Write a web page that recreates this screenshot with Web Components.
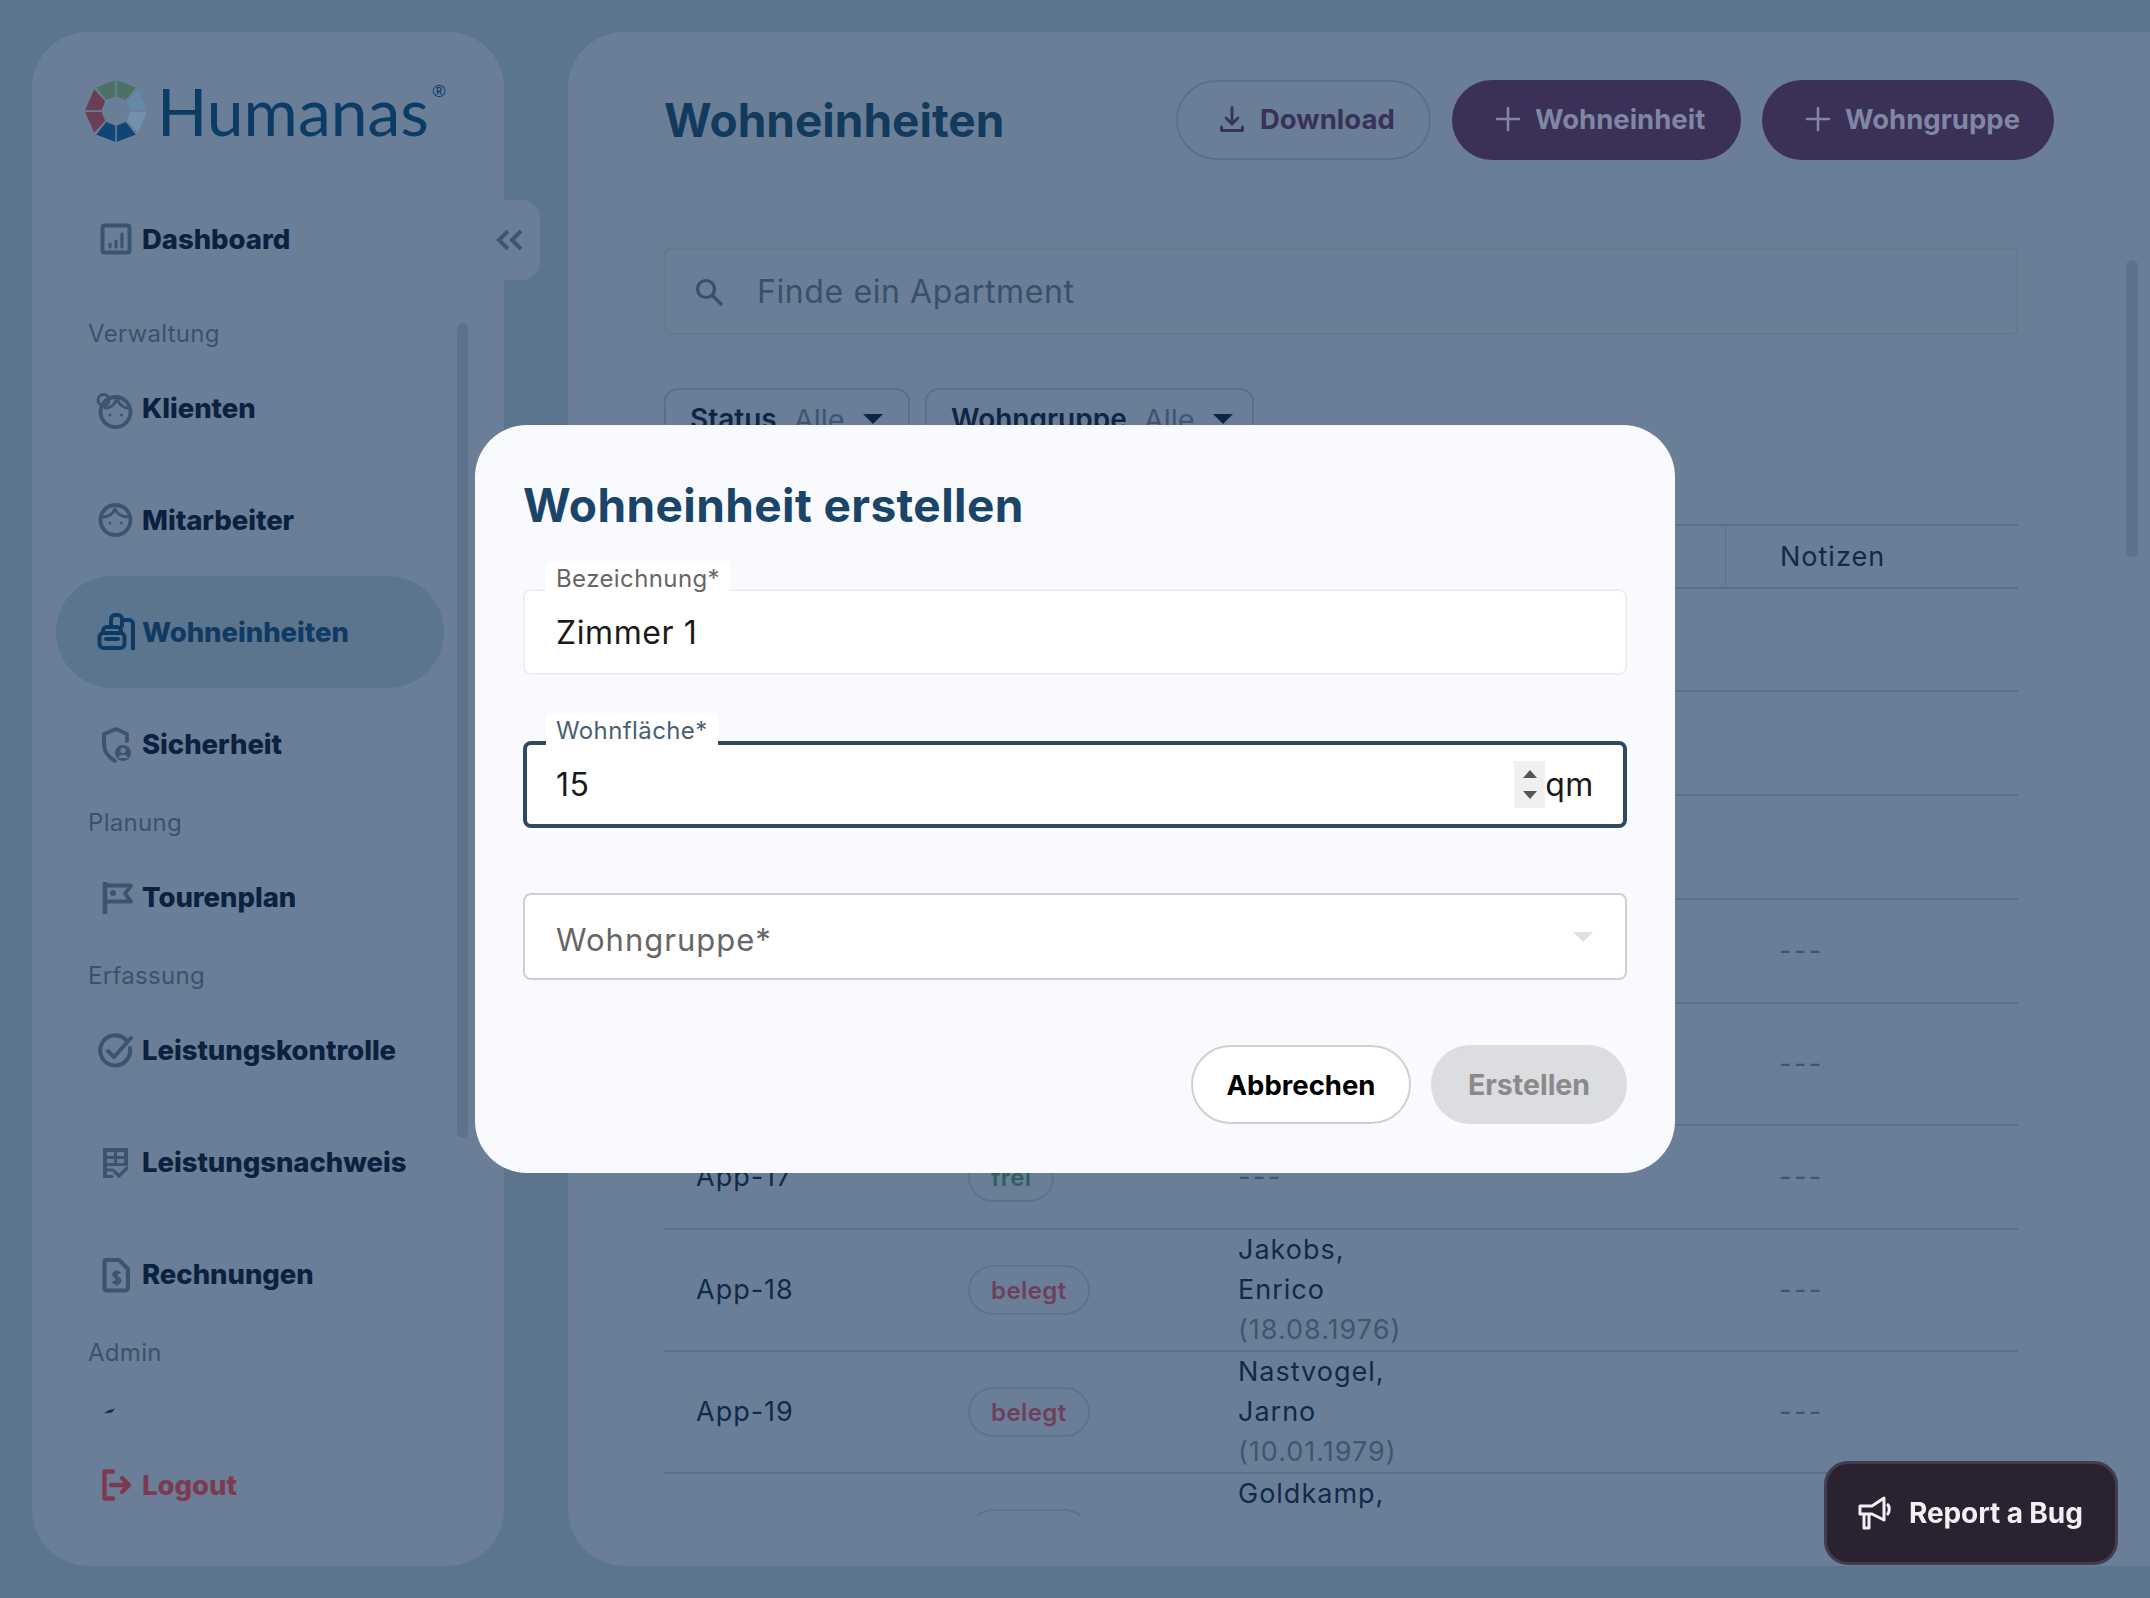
<!DOCTYPE html>
<html lang="de">
<head>
<meta charset="utf-8">
<title>Wohneinheiten</title>
<style>
  html, body { margin: 0; height: 100%; overflow: hidden; background: #5c758f; font-family: Inter, "Liberation Sans", sans-serif; }
  hu-app { height: 1598px; }
  svg[slot="icon"] { overflow: visible; fill: none; stroke: currentColor; stroke-linecap: round; stroke-linejoin: round; }
  hu-nav-item svg[slot="icon"] { width: 40px; height: 40px; }
  .dim { color: #3f566f; letter-spacing: 2.5px; }
</style>
</head>
<body>
<hu-app>
  <hu-sidebar>
    <hu-nav-item class="top" slot="top" label="Dashboard">
      <svg slot="icon" viewBox="0 0 40 40" stroke-width="4"><rect x="6.500" y="6.500" width="27" height="27" rx="2"/><path d="M14 28v-3M20 28v-6M26 28V15" stroke-width="3.200"/></svg>
    </hu-nav-item>

    <hu-nav-label>Verwaltung</hu-nav-label>
    <hu-nav-item label="Klienten">
      <svg slot="icon" viewBox="0 0 40 40" stroke-width="3.800"><circle cx="19.500" cy="24" r="15"/><circle cx="7.500" cy="12" r="5.500" stroke-width="3"/><path d="M9 20c6 0 10-4 12-9 2 5 7 9 13 10" stroke-width="3"/><circle cx="14" cy="27" r="1.500" fill="currentColor" stroke="none"/><circle cx="25.500" cy="27" r="1.500" fill="currentColor" stroke="none"/></svg>
    </hu-nav-item>
    <hu-nav-item label="Mitarbeiter">
      <svg slot="icon" viewBox="0 0 40 40" stroke-width="3.800"><circle cx="19.500" cy="20" r="15"/><path d="M6 17c7 0 11-3 13-8 2 5 7 8 14 8" stroke-width="3"/><circle cx="14" cy="23" r="1.500" fill="currentColor" stroke="none"/><circle cx="25.500" cy="23" r="1.500" fill="currentColor" stroke="none"/></svg>
    </hu-nav-item>
    <hu-nav-item label="Wohneinheiten" active>
      <svg slot="icon" viewBox="0 0 40 40" stroke-width="4"><path d="M7 20v-1a4 4 0 0 1 4-4h10a4 4 0 0 1 4 4v1"/><rect x="3.500" y="21" width="25" height="15" rx="4"/><path d="M10 27h12"/><path d="M15 14V7a4 4 0 0 1 4-4h3a4 4 0 0 1 4 4v7"/><path d="M37 38V12a4 4 0 0 0-4-4h-5" stroke-linecap="butt"/></svg>
    </hu-nav-item>
    <hu-nav-item label="Sicherheit">
      <svg slot="icon" viewBox="0 0 40 40" stroke-width="3.800"><path d="M31 17v-7L20 5 8 10v10c0 8 5 13.500 11 17"/><circle cx="27" cy="29" r="8" fill="#3c546e" stroke="none"/><circle cx="27" cy="26.500" r="2.700" fill="#6a7f97" stroke="none"/><path d="M21.800 34c2-4.500 8.400-4.500 10.400 0z" fill="#6a7f97" stroke="none"/></svg>
    </hu-nav-item>

    <hu-nav-label>Planung</hu-nav-label>
    <hu-nav-item label="Tourenplan">
      <svg slot="icon" viewBox="0 0 40 40" stroke-width="3.800"><path d="M9 5v32" stroke-width="4.600" stroke-linecap="butt"/><path d="M10 8.500h25l-6 8 6 8H10"/><circle cx="17" cy="16" r="3" fill="currentColor" stroke="none"/></svg>
    </hu-nav-item>

    <hu-nav-label>Erfassung</hu-nav-label>
    <hu-nav-item label="Leistungskontrolle">
      <svg slot="icon" viewBox="0 0 40 40" stroke-width="4"><path d="M30 10A15 15 0 1 0 34 18"/><path d="M12 21l6 6L35 8"/></svg>
    </hu-nav-item>
    <hu-nav-item label="Leistungsnachweis">
      <svg slot="icon" viewBox="0 0 40 40" stroke-width="3.200" stroke-linecap="butt"><path fill="currentColor" stroke="none" fill-rule="evenodd" d="M7 6h25v18H7zM11 10v4h7v-4zM21 10v4h7v-4zM11 17v4h7v-4zM21 17v4h7v-4z"/><path fill="currentColor" stroke="none" d="M7 24h4v12H7z"/><path d="M11 28h6M11 34.500h5"/><path d="M19 30l4 4 8-8"/></svg>
    </hu-nav-item>
    <hu-nav-item label="Rechnungen">
      <svg slot="icon" viewBox="0 0 40 40" stroke-width="4.200"><path d="M10 6h13l9 9v19a2.500 2.500 0 0 1-2.500 2.500h-19.500A2 2 0 0 1 8.500 34.500V8A2 2 0 0 1 10 6z"/><path stroke-width="2.800" stroke-linecap="butt" d="M24 19.500c-1-1.500-6-2-6.500 1s6.500 2.500 6.500 6-6 3-7 1M20.500 16.500v15"/></svg>
    </hu-nav-item>

    <hu-nav-label>Admin</hu-nav-label>
    <hu-nav-item>
      <svg slot="icon" viewBox="0 0 40 40"><path d="M8 6.500l4-3 7-2-3 4z" fill="#1a2e4a" stroke="none"/></svg>
    </hu-nav-item>

    <hu-nav-item slot="bottom" label="Logout" tone="danger">
      <svg slot="icon" viewBox="0 0 40 40" stroke-width="4.400"><path d="M17 6.500H8.500v27H17"/><path d="M15 20h17M26 13l7 7-7 7"/></svg>
    </hu-nav-item>
  </hu-sidebar>

  <hu-main>
    <span slot="title">Wohneinheiten</span>
    <hu-button slot="actions" variant="outline" style="width:255px">
      <svg slot="icon" viewBox="0 0 24 26" width="24" height="26" fill="none" stroke="currentColor" stroke-width="2.800" stroke-linecap="round" stroke-linejoin="round"><path d="M12 1.500v16M6 12l6 6 6-6M1.500 21v3.500h21V21"/></svg>
      Download
    </hu-button>
    <hu-button slot="actions" style="width:289px">
      <svg slot="icon" viewBox="0 0 22 22" width="22" height="22" fill="none" stroke="currentColor" stroke-width="2.600"><path d="M11 0v22M0 11h22"/></svg>
      Wohneinheit
    </hu-button>
    <hu-button slot="actions" style="width:292px">
      <svg slot="icon" viewBox="0 0 22 22" width="22" height="22" fill="none" stroke="currentColor" stroke-width="2.600"><path d="M11 0v22M0 11h22"/></svg>
      Wohngruppe
    </hu-button>

    <hu-search slot="search" placeholder="Finde ein Apartment"></hu-search>

    <hu-filter slot="filters" name="Status" value="Alle" style="width:246px"></hu-filter>
    <hu-filter slot="filters" name="Wohngruppe" value="Alle" style="width:329px"></hu-filter>

    <hu-table slot="table">
      <hu-row head style="--h:63px"><span slot="notes">Notizen</span></hu-row>
      <hu-row style="--h:103px"></hu-row>
      <hu-row style="--h:104px"></hu-row>
      <hu-row style="--h:104px"></hu-row>
      <hu-row style="--h:104px"><span slot="notes" class="dim">---</span></hu-row>
      <hu-row style="--h:122px"><span slot="notes" class="dim">---</span></hu-row>
      <hu-row style="--h:104px">
        <span slot="name">App-17</span>
        <hu-status slot="status" tone="free">frei</hu-status>
        <span slot="client" class="dim">---</span>
        <span slot="notes" class="dim">---</span>
      </hu-row>
      <hu-row style="--h:122px">
        <span slot="name">App-18</span>
        <hu-status slot="status" tone="taken">belegt</hu-status>
        <hu-client slot="client" name="Jakobs," first="Enrico" born="(18.08.1976)"></hu-client>
        <span slot="notes" class="dim">---</span>
      </hu-row>
      <hu-row style="--h:122px">
        <span slot="name">App-19</span>
        <hu-status slot="status" tone="taken">belegt</hu-status>
        <hu-client slot="client" name="Nastvogel," first="Jarno" born="(10.01.1979)"></hu-client>
        <span slot="notes" class="dim">---</span>
      </hu-row>
      <hu-row style="--h:122px">
        <hu-status slot="status" tone="taken">belegt</hu-status>
        <hu-client slot="client" name="Goldkamp,"></hu-client>
      </hu-row>
    </hu-table>
  </hu-main>

  <hu-modal heading="Wohneinheit erstellen">
    <hu-field label="Bezeichnung*">Zimmer 1</hu-field>
    <hu-field label="Wohnfläche*" focused unit="qm">15</hu-field>
    <hu-select placeholder="Wohngruppe*"></hu-select>
    <hu-modal-button slot="actions" style="width:220px">Abbrechen</hu-modal-button>
    <hu-modal-button slot="actions" disabled style="width:196px">Erstellen</hu-modal-button>
  </hu-modal>

  <hu-bug-button>Report a Bug</hu-bug-button>
</hu-app>

<script>
class HuApp extends HTMLElement {
  constructor() {
    super();
    this.attachShadow({mode: 'open'});
    this.shadowRoot.innerHTML = `
      <style>
        :host { display: flex; gap: 64px; padding: 32px 0 32px 32px; box-sizing: border-box; width: 2150px; overflow: hidden; }
      </style>
      <slot></slot>
    `;
  }
}

class HuSidebar extends HTMLElement {
  constructor() {
    super();
    this.attachShadow({mode: 'open'});
    this.shadowRoot.innerHTML = `
      <style>
        :host {
          display: flex; flex-direction: column; position: relative; flex: none;
          width: 472px; height: 1534px; box-sizing: border-box;
          padding: 0 60px 25px 24px; background: #6a7f97; border-radius: 56px;
        }
        .logo { display: flex; align-items: flex-start; height: 151px; flex: none; position: relative; padding: 47px 0 0 28px; box-sizing: border-box; color: #0c3b66; }
        .logo svg { width: 64px; height: 64px; flex: none; }
        .brand { font: 400 66px/64px Lato, "Open Sans", sans-serif; margin-left: 9px; letter-spacing: 0; }
        .reg { font: 400 17px/20px "Open Sans", sans-serif; margin: 2px 0 0 3px; }
        .nav { height: 1103px; margin-top: 16px; flex: none; overflow: hidden; }
        .foot { margin-top: 15px; }
        .toggle {
          position: absolute; left: 100%; top: 168px; width: 36px; height: 80px;
          background: #6a7f97; border-radius: 0 18px 18px 0;
        }
        .toggle svg { position: absolute; left: -8px; top: 29px; width: 28px; height: 22px; }
        .thumb { position: absolute; left: 425px; top: 291px; width: 11px; height: 815px; border-radius: 6px; background: #5d738c; }
      </style>
      <div class="logo">
        <svg viewBox="-32 -32 64 64">
          <g stroke="#6a7f97" stroke-width="1.400">
            <path fill="#4d7166" d="M0-32L-21-24-10-10 0-14z"/>
            <path fill="#4d7166" d="M0-32L21-24 10-10 0-14z"/>
            <path fill="#6688a9" d="M22-23L32 0H14L10-10z"/>
            <path fill="#7390ac" d="M32 0L22 23 10 10 14 0z"/>
            <path fill="#0f4675" d="M21 24L0 32V14L10 10z"/>
            <path fill="#0f4675" d="M-21 24L0 32V14L-10 10z"/>
            <path fill="#6a3f55" d="M-22 23L-32 0H-14L-10 10z"/>
            <path fill="#6a3f55" d="M-32 0L-22-23-10-10-14 0z"/>
          </g>
        </svg>
        <span class="brand">Humanas</span><span class="reg">®</span>
      </div>
      <slot name="top"></slot>
      <div class="nav"><slot></slot></div>
      <div class="foot"><slot name="bottom"></slot></div>
      <div class="toggle">
        <svg viewBox="0 0 28 22" fill="none" stroke="#3e5670" stroke-width="4"><path d="M12 2L3 11l9 9M25 2l-9 9 9 9"/></svg>
      </div>
      <div class="thumb"></div>
    `;
  }
}

class HuNavItem extends HTMLElement {
  constructor() {
    super();
    this.attachShadow({mode: 'open'});
    const label = this.getAttribute('label') || '';
    this.shadowRoot.innerHTML = `
      <style>
        :host {
          display: flex; align-items: center; height: 112px; padding-left: 40px; box-sizing: border-box;
          border-radius: 56px; color: #0b2140; font: 800 27.500px Inter, sans-serif; --icon: #3c546e;
        }
        :host([active]) { background: #5c758f; color: #0f3a63; --icon: #0f3a63; }
        :host([tone="danger"]) { color: #7c3a52; --icon: #7c3a52; }
        .icon { width: 40px; height: 40px; flex: none; color: var(--icon); }
        .text { margin-left: 6px; letter-spacing: -.05px; }
      </style>
      <span class="icon"><slot name="icon"></slot></span>
      <span class="text">${label}</span>
    `;
  }
}

class HuNavLabel extends HTMLElement {
  constructor() {
    super();
    this.attachShadow({mode: 'open'});
    this.shadowRoot.innerHTML = `
      <style>
        :host { display: block; height: 41px; box-sizing: border-box; padding: 2px 0 0 32px; font: 400 24px/41px Inter, sans-serif; color: #3a526c; letter-spacing: .3px; }
      </style>
      <slot></slot>
    `;
  }
}

class HuMain extends HTMLElement {
  constructor() {
    super();
    this.attachShadow({mode: 'open'});
    this.shadowRoot.innerHTML = `
      <style>
        :host {
          display: flex; flex-direction: column; position: relative; flex: 1; min-width: 0;
          height: 1534px; box-sizing: border-box; padding: 48px 132px 50px 96px;
          background: #6a7f97; border-radius: 56px 0 0 56px;
        }
        header { display: flex; align-items: center; justify-content: space-between; height: 80px; margin-right: -36px; flex: none; }
        h1 { margin: 0; font: 700 46px Inter, sans-serif; color: #123a5c; }
        .actions { display: flex; gap: 21px; }
        .search { margin-top: 88px; flex: none; }
        .filters { display: flex; gap: 15px; margin-top: 53px; flex: none; }
        .table { margin-top: 76px; flex: 1; min-height: 0; overflow: hidden; }
        .thumb { position: absolute; left: 1558px; top: 228px; width: 12px; height: 297px; border-radius: 6px; background: #5d738c; }
      </style>
      <header>
        <h1><slot name="title"></slot></h1>
        <div class="actions"><slot name="actions"></slot></div>
      </header>
      <div class="search"><slot name="search"></slot></div>
      <div class="filters"><slot name="filters"></slot></div>
      <div class="table"><slot name="table"></slot></div>
      <div class="thumb"></div>
    `;
  }
}

class HuButton extends HTMLElement {
  constructor() {
    super();
    this.attachShadow({mode: 'open'});
    this.shadowRoot.innerHTML = `
      <style>
        :host {
          display: flex; align-items: center; gap: 16px; height: 80px; box-sizing: border-box; padding: 0 0 2px 45px;
          border-radius: 40px; background: #3b3057; color: #7f87a4; font: 700 27.500px Inter, sans-serif;
        }
        :host([variant="outline"]) { background: transparent; border: 2px solid #5a708a; color: #3a3158; padding-left: 42px; }
      </style>
      <slot name="icon"></slot><slot></slot>
    `;
  }
}

class HuSearch extends HTMLElement {
  constructor() {
    super();
    this.attachShadow({mode: 'open'});
    this.shadowRoot.innerHTML = `
      <style>
        :host {
          display: flex; align-items: center; height: 87px; box-sizing: border-box; padding-left: 28px;
          border: 2px solid #647890; border-radius: 6px; color: #38506a; font: 400 32px Inter, sans-serif; letter-spacing: .6px;
        }
        svg { width: 30px; height: 30px; margin-right: 33px; flex: none; }
      </style>
      <svg viewBox="0 0 30 30" fill="none" stroke="#38506a" stroke-width="3.200"><circle cx="12" cy="12" r="8.500"/><path d="M18 18l10 10"/></svg>
      <span>${this.getAttribute('placeholder')}</span>
    `;
  }
}

class HuFilter extends HTMLElement {
  constructor() {
    super();
    this.attachShadow({mode: 'open'});
    this.shadowRoot.innerHTML = `
      <style>
        :host {
          display: flex; align-items: center; height: 60px; box-sizing: border-box; padding: 2px 0 0 24px;
          border: 2px solid #5a708a; border-radius: 14px; font: 400 29px Inter, sans-serif; color: #3f566f;
        }
        b { font-size: 28px; font-weight: 600; color: #0e2645; margin-right: 17px; }
        i { width: 0; height: 0; margin-left: 18px; border: 10px solid transparent; border-top: 10px solid #0e2645; border-bottom: 0; }
      </style>
      <b>${this.getAttribute('name')}</b><span>${this.getAttribute('value')}</span><i></i>
    `;
  }
}

class HuTable extends HTMLElement {
  constructor() {
    super();
    this.attachShadow({mode: 'open'});
    this.shadowRoot.innerHTML = `
      <style>
        :host { display: block; border-top: 2px solid #5a708a; }
      </style>
      <slot></slot>
    `;
  }
}

class HuRow extends HTMLElement {
  constructor() {
    super();
    this.attachShadow({mode: 'open'});
    this.shadowRoot.innerHTML = `
      <style>
        :host {
          display: grid; grid-template-columns: 272px 270px 519px 1fr; height: var(--h);
          box-sizing: border-box; border-bottom: 2px solid #5a708a;
          font: 400 27px/40px Inter, sans-serif; color: #112a4a; letter-spacing: 1px;
        }
        .cell { display: flex; align-items: center; min-width: 0; padding-left: 32px; }
        .notes { padding-left: 54px; }
        :host([head]) .notes { border-left: 1px solid #5a708a; }
      </style>
      <div class="cell"><slot name="name"></slot></div>
      <div class="cell"><slot name="status"></slot></div>
      <div class="cell"><slot name="client"></slot></div>
      <div class="cell notes"><slot name="notes"></slot></div>
    `;
  }
}

class HuStatus extends HTMLElement {
  constructor() {
    super();
    this.attachShadow({mode: 'open'});
    this.shadowRoot.innerHTML = `
      <style>
        :host {
          display: flex; align-items: center; height: 50px; box-sizing: border-box; padding: 0 21px;
          border: 2px solid #5d738c; border-radius: 25px; font: 600 24px Inter, sans-serif; letter-spacing: .4px;
        }
        :host([tone="free"]) { color: #2e5f63; }
        :host([tone="taken"]) { color: #6e3f5c; }
      </style>
      <slot></slot>
    `;
  }
}

class HuClient extends HTMLElement {
  constructor() {
    super();
    this.attachShadow({mode: 'open'});
    const first = this.getAttribute('first');
    const born = this.getAttribute('born');
    this.shadowRoot.innerHTML = `
      <style>
        :host { display: block; align-self: flex-start; }
        div { height: 40px; }
        .born { color: #3f566f; }
      </style>
      <div>${this.getAttribute('name')}</div>
      ${first ? `<div>${first}</div>` : ''}
      ${born ? `<div class="born">${born}</div>` : ''}
    `;
  }
}

class HuModal extends HTMLElement {
  constructor() {
    super();
    this.attachShadow({mode: 'open'});
    this.shadowRoot.innerHTML = `
      <style>
        :host { position: fixed; inset: 0; display: flex; align-items: center; justify-content: center; z-index: 10; }
        .box {
          width: 1200px; box-sizing: border-box; padding: 50px 48px 49px;
          background: #f9fafe; border-radius: 52px;
        }
        h2 { margin: 0 0 54px; font: 700 46px/60px Inter, sans-serif; color: #1a4468; letter-spacing: .4px; }
        .fields { display: flex; flex-direction: column; gap: 65px; }
        .actions { display: flex; justify-content: flex-end; gap: 20px; margin-top: 65px; }
      </style>
      <div class="box">
        <h2>${this.getAttribute('heading')}</h2>
        <div class="fields"><slot></slot></div>
        <div class="actions"><slot name="actions"></slot></div>
      </div>
    `;
  }
}

class HuField extends HTMLElement {
  constructor() {
    super();
    this.attachShadow({mode: 'open'});
    const unit = this.getAttribute('unit');
    this.shadowRoot.innerHTML = `
      <style>
        :host {
          display: flex; align-items: center; position: relative; height: 86px; box-sizing: border-box; padding: 0 31px;
          background: #fff; border: 2px solid #eeeff2; border-radius: 8px; font: 400 32px Inter, sans-serif; color: #1a1a1a; letter-spacing: .6px;
        }
        :host([focused]) { height: 87px; margin-top: 1px; border: 4px solid #2f4a60; padding: 0 29px; }
        label {
          position: absolute; left: 21px; top: -28px; padding: 0 10px; background: #fff;
          font: 400 24px/32px Inter, sans-serif; color: #666; letter-spacing: .4px;
        }
        :host([focused]) label { left: 19px; top: -30px; height: 36px; color: #4a6072; }
        .value { flex: 1; }
        .spin { width: 31px; height: 47px; background: #f0f0f0; display: flex; flex-direction: column; align-items: center; justify-content: space-between; padding: 9px 0; box-sizing: border-box; }
        .up, .down { width: 0; height: 0; border: 7px solid transparent; }
        .up { border-top: 0; border-bottom: 8px solid #555; }
        .down { border-bottom: 0; border-top: 8px solid #555; }
      </style>
      <label>${this.getAttribute('label')}</label>
      <span class="value"><slot></slot></span>
      ${unit ? `<span class="spin"><i class="up"></i><i class="down"></i></span><span>${unit}</span>` : ''}
    `;
  }
}

class HuSelect extends HTMLElement {
  constructor() {
    super();
    this.attachShadow({mode: 'open'});
    this.shadowRoot.innerHTML = `
      <style>
        :host {
          display: flex; align-items: center; justify-content: space-between; height: 87px; box-sizing: border-box; padding: 5px 32px 0 31px;
          background: #fff; border: 2px solid #d0d0d3; border-radius: 8px; font: 400 31px Inter, sans-serif; color: #666; letter-spacing: 1px;
        }
        i { width: 0; height: 0; margin-top: -4px; border: 10px solid transparent; border-top: 10px solid #e0e0e2; border-bottom: 0; }
      </style>
      <span>${this.getAttribute('placeholder')}</span><i></i>
    `;
  }
}

class HuModalButton extends HTMLElement {
  constructor() {
    super();
    this.attachShadow({mode: 'open'});
    this.shadowRoot.innerHTML = `
      <style>
        :host {
          display: flex; align-items: center; justify-content: center; height: 79px; box-sizing: border-box;
          background: #fff; border: 2px solid #d0d0d3; border-radius: 40px; font: 700 27.500px Inter, sans-serif; color: #000;
        }
        :host([disabled]) { background: #dcdde0; border-color: #dcdde0; color: #8a8a8a; font-size: 28.500px; }
      </style>
      <slot></slot>
    `;
  }
}

class HuBugButton extends HTMLElement {
  constructor() {
    super();
    this.attachShadow({mode: 'open'});
    this.shadowRoot.innerHTML = `
      <style>
        :host {
          position: fixed; left: 1824px; top: 1461px; width: 294px; height: 104px; box-sizing: border-box; z-index: 20;
          display: flex; align-items: center; gap: 15px; padding-left: 31px;
          background: #2a2231; border: 3px solid #423c4e; border-radius: 24px;
          font: 700 28px Inter, sans-serif; color: #f3f0f5; letter-spacing: -.1px;
        }
        svg { width: 36px; height: 36px; flex: none; }
      </style>
      <svg viewBox="0 0 36 36" fill="none" stroke="#f3f0f5" stroke-width="3" stroke-linejoin="round"><path d="M2 11h12L26 3v22l-12-6H2z"/><path d="M6 19v14h5V19"/><path d="M29 9c3 2 3 8 0 11"/></svg>
      <slot></slot>
    `;
  }
}

customElements.define('hu-app', HuApp);
customElements.define('hu-sidebar', HuSidebar);
customElements.define('hu-nav-item', HuNavItem);
customElements.define('hu-nav-label', HuNavLabel);
customElements.define('hu-main', HuMain);
customElements.define('hu-button', HuButton);
customElements.define('hu-search', HuSearch);
customElements.define('hu-filter', HuFilter);
customElements.define('hu-table', HuTable);
customElements.define('hu-row', HuRow);
customElements.define('hu-status', HuStatus);
customElements.define('hu-client', HuClient);
customElements.define('hu-modal', HuModal);
customElements.define('hu-field', HuField);
customElements.define('hu-select', HuSelect);
customElements.define('hu-modal-button', HuModalButton);
customElements.define('hu-bug-button', HuBugButton);
</script>
</body>
</html>
